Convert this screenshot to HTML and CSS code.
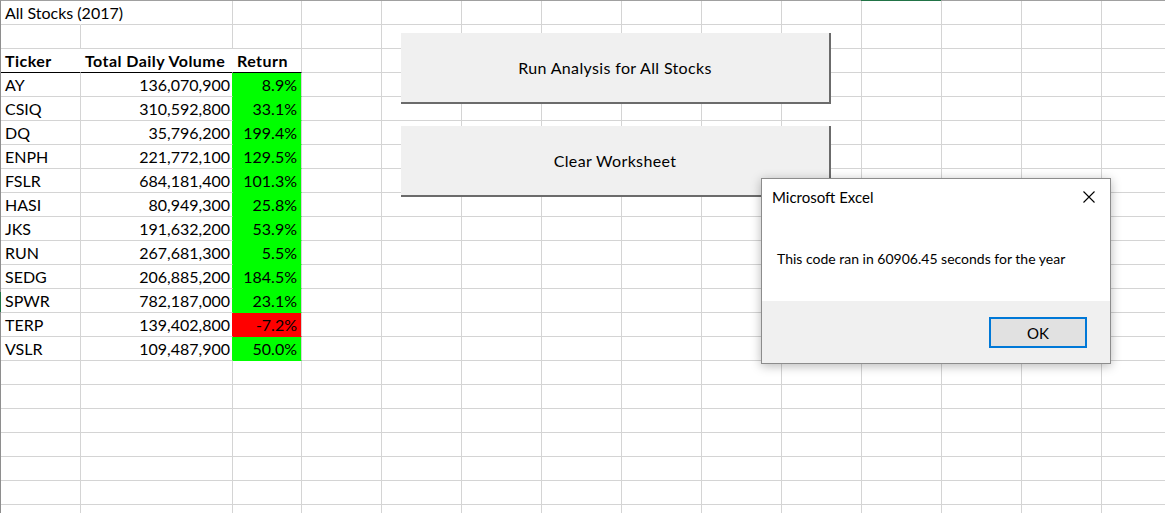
FILE: index.html
```html
<!DOCTYPE html>
<html>
<head>
<meta charset="utf-8">
<title>All Stocks (2017)</title>
<link rel="stylesheet" href="styles.css">
</head>
<body>
<div class="page">
  <div class="sheet">
    <!-- row 1 -->
    <div class="c ovf">All Stocks (2017)</div><div class="c"></div><div class="c"></div><div class="c"></div><div class="c"></div><div class="c"></div><div class="c"></div><div class="c"></div><div class="c"></div><div class="c"></div><div class="c"></div><div class="c"></div><div class="c"></div><div class="c"></div>
    <!-- row 2 -->
    <div class="c"></div><div class="c"></div><div class="c"></div><div class="c"></div><div class="c"></div><div class="c"></div><div class="c"></div><div class="c"></div><div class="c"></div><div class="c"></div><div class="c"></div><div class="c"></div><div class="c"></div><div class="c"></div>
    <!-- row 3 -->
    <div class="c hd hd-in">Ticker</div><div class="c hd hd-in">Total Daily Volume</div><div class="c hd">Return</div><div class="c"></div><div class="c"></div><div class="c"></div><div class="c"></div><div class="c"></div><div class="c"></div><div class="c"></div><div class="c"></div><div class="c"></div><div class="c"></div><div class="c"></div>
    <!-- data rows -->
    <div class="c">AY</div><div class="c num edge-up">136,070,900</div><div class="c pct up">8.9%</div><div class="c"></div><div class="c"></div><div class="c"></div><div class="c"></div><div class="c"></div><div class="c"></div><div class="c"></div><div class="c"></div><div class="c"></div><div class="c"></div><div class="c"></div>
    <div class="c">CSIQ</div><div class="c num edge-up">310,592,800</div><div class="c pct up">33.1%</div><div class="c"></div><div class="c"></div><div class="c"></div><div class="c"></div><div class="c"></div><div class="c"></div><div class="c"></div><div class="c"></div><div class="c"></div><div class="c"></div><div class="c"></div>
    <div class="c">DQ</div><div class="c num edge-up">35,796,200</div><div class="c pct up">199.4%</div><div class="c"></div><div class="c"></div><div class="c"></div><div class="c"></div><div class="c"></div><div class="c"></div><div class="c"></div><div class="c"></div><div class="c"></div><div class="c"></div><div class="c"></div>
    <div class="c">ENPH</div><div class="c num edge-up">221,772,100</div><div class="c pct up">129.5%</div><div class="c"></div><div class="c"></div><div class="c"></div><div class="c"></div><div class="c"></div><div class="c"></div><div class="c"></div><div class="c"></div><div class="c"></div><div class="c"></div><div class="c"></div>
    <div class="c">FSLR</div><div class="c num edge-up">684,181,400</div><div class="c pct up">101.3%</div><div class="c"></div><div class="c"></div><div class="c"></div><div class="c"></div><div class="c"></div><div class="c"></div><div class="c"></div><div class="c"></div><div class="c"></div><div class="c"></div><div class="c"></div>
    <div class="c">HASI</div><div class="c num edge-up">80,949,300</div><div class="c pct up">25.8%</div><div class="c"></div><div class="c"></div><div class="c"></div><div class="c"></div><div class="c"></div><div class="c"></div><div class="c"></div><div class="c"></div><div class="c"></div><div class="c"></div><div class="c"></div>
    <div class="c">JKS</div><div class="c num edge-up">191,632,200</div><div class="c pct up">53.9%</div><div class="c"></div><div class="c"></div><div class="c"></div><div class="c"></div><div class="c"></div><div class="c"></div><div class="c"></div><div class="c"></div><div class="c"></div><div class="c"></div><div class="c"></div>
    <div class="c">RUN</div><div class="c num edge-up">267,681,300</div><div class="c pct up">5.5%</div><div class="c"></div><div class="c"></div><div class="c"></div><div class="c"></div><div class="c"></div><div class="c"></div><div class="c"></div><div class="c"></div><div class="c"></div><div class="c"></div><div class="c"></div>
    <div class="c">SEDG</div><div class="c num edge-up">206,885,200</div><div class="c pct up">184.5%</div><div class="c"></div><div class="c"></div><div class="c"></div><div class="c"></div><div class="c"></div><div class="c"></div><div class="c"></div><div class="c"></div><div class="c"></div><div class="c"></div><div class="c"></div>
    <div class="c">SPWR</div><div class="c num edge-up">782,187,000</div><div class="c pct up">23.1%</div><div class="c"></div><div class="c"></div><div class="c"></div><div class="c"></div><div class="c"></div><div class="c"></div><div class="c"></div><div class="c"></div><div class="c"></div><div class="c"></div><div class="c"></div>
    <div class="c">TERP</div><div class="c num edge-dn">139,402,800</div><div class="c pct dn">-7.2%</div><div class="c"></div><div class="c"></div><div class="c"></div><div class="c"></div><div class="c"></div><div class="c"></div><div class="c"></div><div class="c"></div><div class="c"></div><div class="c"></div><div class="c"></div>
    <div class="c">VSLR</div><div class="c num edge-up">109,487,900</div><div class="c pct up">50.0%</div><div class="c"></div><div class="c"></div><div class="c"></div><div class="c"></div><div class="c"></div><div class="c"></div><div class="c"></div><div class="c"></div><div class="c"></div><div class="c"></div><div class="c"></div>
    <!-- empty rows -->
    <div class="c"></div><div class="c"></div><div class="c"></div><div class="c"></div><div class="c"></div><div class="c"></div><div class="c"></div><div class="c"></div><div class="c"></div><div class="c"></div><div class="c"></div><div class="c"></div><div class="c"></div><div class="c"></div>
    <div class="c"></div><div class="c"></div><div class="c"></div><div class="c"></div><div class="c"></div><div class="c"></div><div class="c"></div><div class="c"></div><div class="c"></div><div class="c"></div><div class="c"></div><div class="c"></div><div class="c"></div><div class="c"></div>
    <div class="c"></div><div class="c"></div><div class="c"></div><div class="c"></div><div class="c"></div><div class="c"></div><div class="c"></div><div class="c"></div><div class="c"></div><div class="c"></div><div class="c"></div><div class="c"></div><div class="c"></div><div class="c"></div>
    <div class="c"></div><div class="c"></div><div class="c"></div><div class="c"></div><div class="c"></div><div class="c"></div><div class="c"></div><div class="c"></div><div class="c"></div><div class="c"></div><div class="c"></div><div class="c"></div><div class="c"></div><div class="c"></div>
    <div class="c"></div><div class="c"></div><div class="c"></div><div class="c"></div><div class="c"></div><div class="c"></div><div class="c"></div><div class="c"></div><div class="c"></div><div class="c"></div><div class="c"></div><div class="c"></div><div class="c"></div><div class="c"></div>
    <div class="c"></div><div class="c"></div><div class="c"></div><div class="c"></div><div class="c"></div><div class="c"></div><div class="c"></div><div class="c"></div><div class="c"></div><div class="c"></div><div class="c"></div><div class="c"></div><div class="c"></div><div class="c"></div>
    <div class="c"></div><div class="c"></div><div class="c"></div><div class="c"></div><div class="c"></div><div class="c"></div><div class="c"></div><div class="c"></div><div class="c"></div><div class="c"></div><div class="c"></div><div class="c"></div><div class="c"></div><div class="c"></div>
  </div>

  <div class="sel-col"></div>
  <div class="sel-row"></div>

  <div class="xbtn b1">Run Analysis for All Stocks</div>
  <div class="xbtn b2">Clear Worksheet</div>

  <div class="dialog">
    <div class="dlg-head">
      <span class="dlg-title">Microsoft Excel</span>
      <svg class="dlg-close" width="12" height="12" viewBox="0 0 12 12"><path d="M0.5 0.5 L11.5 11.5 M11.5 0.5 L0.5 11.5" stroke="#000" stroke-width="1.1" fill="none"/></svg>
    </div>
    <div class="dlg-body">This code ran in 60906.45 seconds for the year</div>
    <div class="dlg-foot">
      <div class="dlg-ok">OK</div>
    </div>
  </div>
</div>
</body>
</html>
```
FILE: styles.css
```css
html, body {
  margin: 0;
  padding: 0;
}
body {
  width: 1165px;
  height: 513px;
  overflow: hidden;
  background: #fff;
  font-family: Lato, "Liberation Sans", sans-serif;
}
.page {
  position: relative;
  width: 1165px;
  height: 513px;
  overflow: hidden;
}
.sheet {
  display: grid;
  grid-template-columns: 80px 152px 69px repeat(11, 80px);
  grid-auto-rows: 24px;
  border-top: 1px solid #a0a0a0;
  border-left: 1px solid #8e8e8e;
  width: max-content;
}
.c {
  box-sizing: border-box;
  border-right: 1px solid #d4d4d4;
  border-bottom: 1px solid #d4d4d4;
  font-size: 16px;
  line-height: 19px;
  color: #000;
  display: flex;
  align-items: flex-end;
  padding: 0 3px 2px 4px;
  white-space: nowrap;
}
.ovf {
  border-right-color: transparent;
  overflow: visible;
}
.hd {
  font-weight: 700;
  letter-spacing: 0.45px;
  border-bottom-color: #000;
}
.hd-in {
  border-right-color: #fff;
}
.num {
  justify-content: flex-end;
  padding-right: 2px;
}
.pct {
  justify-content: flex-end;
  padding-right: 4px;
}
.up {
  background: #00ff00;
  border-bottom-color: #00ff00;
}
.dn {
  background: #ff0000;
  border-bottom-color: #ff0000;
}
.edge-up {
  border-right-color: #00ff00;
}
.edge-dn {
  border-right-color: #ff0000;
}

.sel-col {
  position: absolute;
  left: 861px;
  top: 0;
  width: 80px;
  height: 1px;
  background: #217346;
}
.sel-row {
  position: absolute;
  left: 0;
  top: 292px;
  width: 1px;
  height: 20px;
  background: #217346;
}

.xbtn {
  position: absolute;
  left: 401px;
  width: 430px;
  height: 71px;
  box-sizing: border-box;
  background: #f0f0f0;
  border-right: 2px solid #6b6b6b;
  border-bottom: 2px solid #6b6b6b;
  display: flex;
  align-items: center;
  justify-content: center;
  font-size: 16px;
  letter-spacing: 0.35px;
  color: #000;
}
.b1 { top: 33px; }
.b2 { top: 126px; }

.dialog {
  position: absolute;
  left: 761px;
  top: 178px;
  width: 350px;
  height: 186px;
  box-sizing: border-box;
  border: 1px solid #8c8c8c;
  background: #fff;
  box-shadow: 0 2px 10px rgba(0, 0, 0, 0.28);
  display: flex;
  flex-direction: column;
  font-family: Lato, "Open Sans", sans-serif;
  color: #000;
}
.dlg-head {
  height: 36px;
  flex: none;
  display: flex;
  align-items: center;
  justify-content: space-between;
  padding: 0 15px 0 10px;
}
.dlg-title {
  font-size: 15px;
}
.dlg-close {
  display: block;
}
.dlg-body {
  flex: 1;
  display: flex;
  align-items: center;
  padding-left: 15px;
  font-size: 14px;
}
.dlg-foot {
  height: 62px;
  flex: none;
  background: #f0f0f0;
  display: flex;
  justify-content: flex-end;
  align-items: flex-start;
  padding: 16px 23px 0 0;
  box-sizing: border-box;
}
.dlg-ok {
  width: 98px;
  height: 31px;
  box-sizing: border-box;
  border: 2px solid #0078d7;
  background: #e1e1e1;
  display: flex;
  align-items: center;
  justify-content: center;
  font-size: 15px;
}
```
